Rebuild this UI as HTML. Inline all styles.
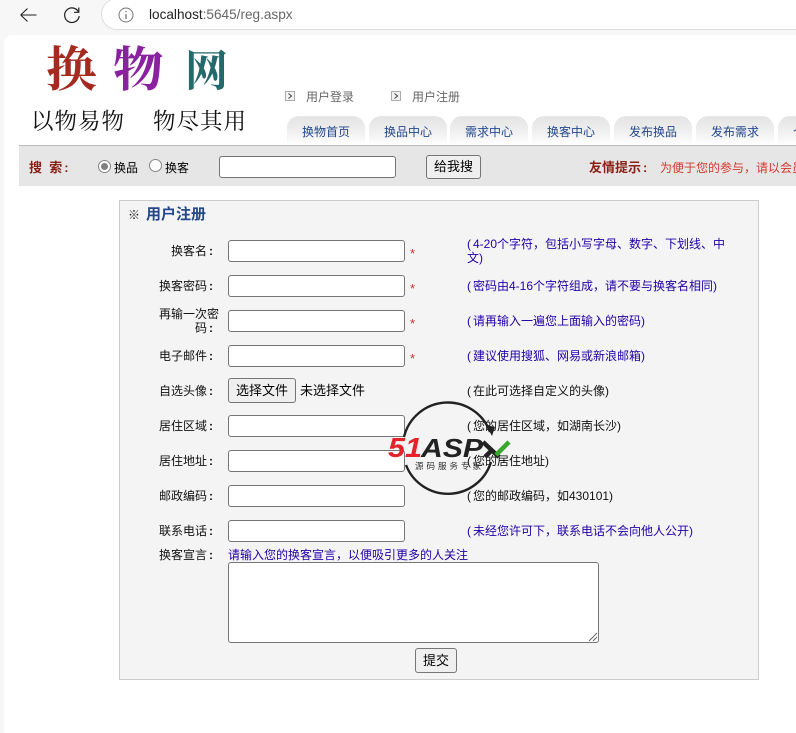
<!DOCTYPE html>
<html lang="zh-CN">
<head>
<meta charset="utf-8">
<title>用户注册</title>
<style>
html,body{margin:0;padding:0;width:796px;height:733px;overflow:hidden;background:#f7f7f7;}
body{position:relative;font-family:"Liberation Sans","WenQuanYi Zen Hei","Noto Sans CJK SC",sans-serif;font-size:12px;color:#000;}
#root{position:absolute;left:0;top:0;width:796px;height:733px;overflow:hidden;}
.a{position:absolute;white-space:nowrap;line-height:14px;}
#page{position:absolute;left:4px;top:35px;width:792px;height:698px;background:#fff;border-top-left-radius:8px;}
#url{position:absolute;left:101px;top:-2px;width:695px;height:32px;background:#fff;border:1px solid #dedede;border-right:0;border-radius:16px 0 0 16px;box-sizing:border-box;}
.logo{font-family:"Liberation Serif","Noto Serif CJK SC",serif;font-weight:700;line-height:56px;transform-origin:left center;}
.tag{font-family:"Liberation Serif","Noto Serif CJK SC",serif;font-size:22.5px;line-height:28px;letter-spacing:1px;color:#111;}
.tab{position:absolute;top:116px;width:78px;height:29px;box-sizing:border-box;border-radius:12px 12px 0 0;background:linear-gradient(#e4e4e4,#f0f0f0 55%,#fff);border-top:1px solid #e8e8e8;color:#23488c;text-align:center;line-height:31px;}
#tab7{position:absolute;left:778px;top:116px;width:18px;height:29px;overflow:hidden;}
#bar{position:absolute;left:19px;top:145px;width:777px;height:41px;background:#e6e6e6;border-top:1px solid #b8b8b8;box-sizing:border-box;}
#box{position:absolute;left:119px;top:200px;width:640px;height:480px;background:#f4f4f4;border:1px solid #ccc;box-sizing:border-box;}
.in{position:absolute;left:228px;width:177px;height:22px;background:#fff;border:1px solid #767676;border-radius:3px;box-sizing:border-box;}
.l{position:absolute;width:100px;left:113px;text-align:right;line-height:14px;color:#111;}
.c{margin-left:2px;font-weight:700;}
.p{display:inline-block;width:6px;text-align:left;}
.q{display:inline-block;width:6px;text-align:left;}
.star{position:absolute;left:410px;color:#c9302c;font-size:13px;line-height:14px;}
.h{position:absolute;left:467px;white-space:nowrap;line-height:14px;color:#2200aa;}
.k{color:#111;}
.btn{position:absolute;background:#efefef;border:1px solid #767676;border-radius:3px;box-sizing:border-box;text-align:center;color:#000;}
.radio{position:absolute;width:13px;height:13px;border-radius:50%;border:1px solid #858585;background:#fff;box-sizing:border-box;}
</style>
</head>
<body>
<div id="root">
<svg class="a" style="left:20px;top:8px" width="17" height="14" viewBox="0 0 17 14" fill="none" stroke="#222" stroke-width="1.1"><path d="M.7 7H16.5M.7 7L7.5 .5M.7 7L7.5 13.5"/></svg>
<svg class="a" style="left:63px;top:6px" width="18" height="18" viewBox="0 0 18 18" fill="none" stroke="#222" stroke-width="1.2"><path d="M15.5 6A7.3 7.3 0 1 0 16.2 10"/><path d="M15.8 1.5V6.3H11"/></svg>
<div id="url"></div>
<svg class="a" style="left:117px;top:6px" width="18" height="18" viewBox="0 0 18 18" fill="none" stroke="#777" stroke-width="1"><circle cx="9" cy="9" r="7"/><path d="M9 8V13M9 5V6.3" stroke-width="1.3"/></svg>
<div class="a" style="left:149px;top:8px;font-size:13.6px;color:#222">localhost<span style="color:#666">:5645/reg.aspx</span></div>

<div id="page"></div>

<div class="a logo" style="left:46px;top:43px;font-size:48px;color:#a52a20;transform:scaleX(1.06)">换</div>
<div class="a logo" style="left:113px;top:43px;font-size:48px;color:#8a22a0;transform:scaleX(1.05)">物</div>
<div class="a logo" style="left:185px;top:45px;font-size:43px;color:#24696b">网</div>
<div class="a tag" style="left:31px;top:108px">以物易物</div>
<div class="a tag" style="left:153px;top:108px">物尽其用</div>

<svg class="a" style="left:285px;top:91px" width="10" height="10" viewBox="0 0 10 10" fill="#f2f2f2" stroke="#aaa"><rect x=".5" y=".5" width="9" height="9"/><path d="M3.5 2.5L6.5 5L3.5 7.5" fill="none" stroke="#444"/></svg>
<div class="a" style="left:306px;top:90px;color:#666">用户登录</div>
<svg class="a" style="left:391px;top:91px" width="10" height="10" viewBox="0 0 10 10" fill="#f2f2f2" stroke="#aaa"><rect x=".5" y=".5" width="9" height="9"/><path d="M3.5 2.5L6.5 5L3.5 7.5" fill="none" stroke="#444"/></svg>
<div class="a" style="left:412px;top:90px;color:#666">用户注册</div>

<div class="tab" style="left:287px">换物首页</div>
<div class="tab" style="left:369px">换品中心</div>
<div class="tab" style="left:450px">需求中心</div>
<div class="tab" style="left:532px">换客中心</div>
<div class="tab" style="left:614px">发布换品</div>
<div class="tab" style="left:696px">发布需求</div>
<div id="tab7"><div class="tab" style="left:0;top:0">个人中心</div></div>

<div id="bar"></div>
<div class="a" style="left:29px;top:161px;color:#8b1f14;font-weight:700;font-size:13px">搜&nbsp;&nbsp;索<span class="c">:</span></div>
<div class="radio" style="left:98px;top:160px"></div>
<div class="a" style="left:101px;top:163px;width:7px;height:7px;border-radius:50%;background:#808080"></div>
<div class="a" style="left:114px;top:161px">换品</div>
<div class="radio" style="left:149px;top:159px"></div>
<div class="a" style="left:165px;top:161px">换客</div>
<div class="in" style="left:219px;top:156px;width:177px"></div>
<div class="btn" style="left:426px;top:155px;width:55px;height:24px;font-size:13px;line-height:22px">给我搜</div>
<div class="a" style="left:589px;top:161px;color:#8b1f14;font-weight:700;font-size:13px">友情提示<span class="c">:</span></div>
<div class="a" style="left:660px;top:161px;width:136px;overflow:hidden;color:#d8382c">为便于您的参与&#65292;请以会员身份登录</div>

<div id="box"></div>
<div class="a" style="left:128px;top:208px;color:#222">※</div>
<div class="a" style="left:146px;top:207px;color:#23488c;font-weight:700;font-size:15px;line-height:16px">用户注册</div>

<div class="l" style="top:244px">换客名<span class="c">:</span></div>
<div class="in" style="top:240px"></div>
<div class="star" style="top:247px">*</div>
<div class="h" style="top:237px"><span class="p">(</span>4-20个字符&#65292;包括小写字母、数字、下划线、中</div>
<div class="h" style="top:251px">文<span class="q">)</span></div>

<div class="l" style="top:279px">换客密码<span class="c">:</span></div>
<div class="in" style="top:275px"></div>
<div class="star" style="top:282px">*</div>
<div class="h" style="top:279px"><span class="p">(</span>密码由4-16个字符组成&#65292;请不要与换客名相同<span class="q">)</span></div>

<div class="l" style="top:307px;left:119px">再输一次密</div>
<div class="l" style="top:321px">码<span class="c">:</span></div>
<div class="in" style="top:310px"></div>
<div class="star" style="top:317px">*</div>
<div class="h" style="top:314px"><span class="p">(</span>请再输入一遍您上面输入的密码<span class="q">)</span></div>

<div class="l" style="top:349px">电子邮件<span class="c">:</span></div>
<div class="in" style="top:345px"></div>
<div class="star" style="top:352px">*</div>
<div class="h" style="top:349px"><span class="p">(</span>建议使用搜狐、网易或新浪邮箱<span class="q">)</span></div>

<div class="l" style="top:384px">自选头像<span class="c">:</span></div>
<div class="btn" style="left:228px;top:378px;width:68px;height:25px;line-height:24px;font-size:13px">选择文件</div>
<div class="a" style="left:300px;top:384px;font-size:13px">未选择文件</div>
<div class="h k" style="top:384px"><span class="p">(</span>在此可选择自定义的头像<span class="q">)</span></div>

<div class="l" style="top:419px">居住区域<span class="c">:</span></div>
<div class="in" style="top:415px"></div>
<div class="h k" style="top:419px"><span class="p">(</span>您的居住区域&#65292;如湖南长沙<span class="q">)</span></div>

<div class="l" style="top:454px">居住地址<span class="c">:</span></div>
<div class="in" style="top:450px"></div>
<div class="h k" style="top:454px"><span class="p">(</span>您的居住地址<span class="q">)</span></div>

<div class="l" style="top:489px">邮政编码<span class="c">:</span></div>
<div class="in" style="top:485px"></div>
<div class="h k" style="top:489px"><span class="p">(</span>您的邮政编码&#65292;如430101<span class="q">)</span></div>

<div class="l" style="top:524px">联系电话<span class="c">:</span></div>
<div class="in" style="top:520px"></div>
<div class="h" style="top:524px"><span class="p">(</span>未经您许可下&#65292;联系电话不会向他人公开<span class="q">)</span></div>

<div class="l" style="top:548px">换客宣言<span class="c">:</span></div>
<div class="a" style="left:228px;top:548px;color:#2200aa">请输入您的换客宣言&#65292;以便吸引更多的人关注</div>
<div class="in" style="top:562px;width:371px;height:81px"></div>
<svg class="a" style="left:588px;top:632px" width="10" height="10" viewBox="0 0 10 10" stroke="#666" fill="none"><path d="M1 9L9 1M5 9L9 5"/></svg>
<div class="btn" style="left:415px;top:648px;width:42px;height:25px;line-height:24px;font-size:13px">提交</div>

<svg class="a" style="left:385px;top:400px" width="128" height="96" viewBox="0 0 128 96">
<path d="M19 37A45 45 0 0 1 105 32M21 65A45 45 0 0 0 106 62" fill="none" stroke="#222" stroke-width="2.4"/>
<path d="M101 25L107 36L110 27Z" fill="#222"/>
<text x="3" y="57" font-family="Liberation Sans,sans-serif" font-weight="700" font-style="italic" font-size="28" fill="#e3242b" textLength="34" lengthAdjust="spacingAndGlyphs">51</text>
<text x="36" y="57" font-family="Liberation Sans,sans-serif" font-weight="700" font-style="italic" font-size="26" fill="#222" textLength="62" lengthAdjust="spacingAndGlyphs">ASP</text>
<path d="M98 42L114 57M100 57L108 49" stroke="#222" stroke-width="4.5" fill="none"/>
<path d="M124 42L111 55" stroke="#3aa62d" stroke-width="4.5" fill="none"/>
<text x="30" y="69" font-family="Liberation Sans,Noto Sans CJK SC,sans-serif" font-size="8.5" fill="#333" letter-spacing="3">源码服务专家</text>
</svg>
</div>
</body>
</html>
